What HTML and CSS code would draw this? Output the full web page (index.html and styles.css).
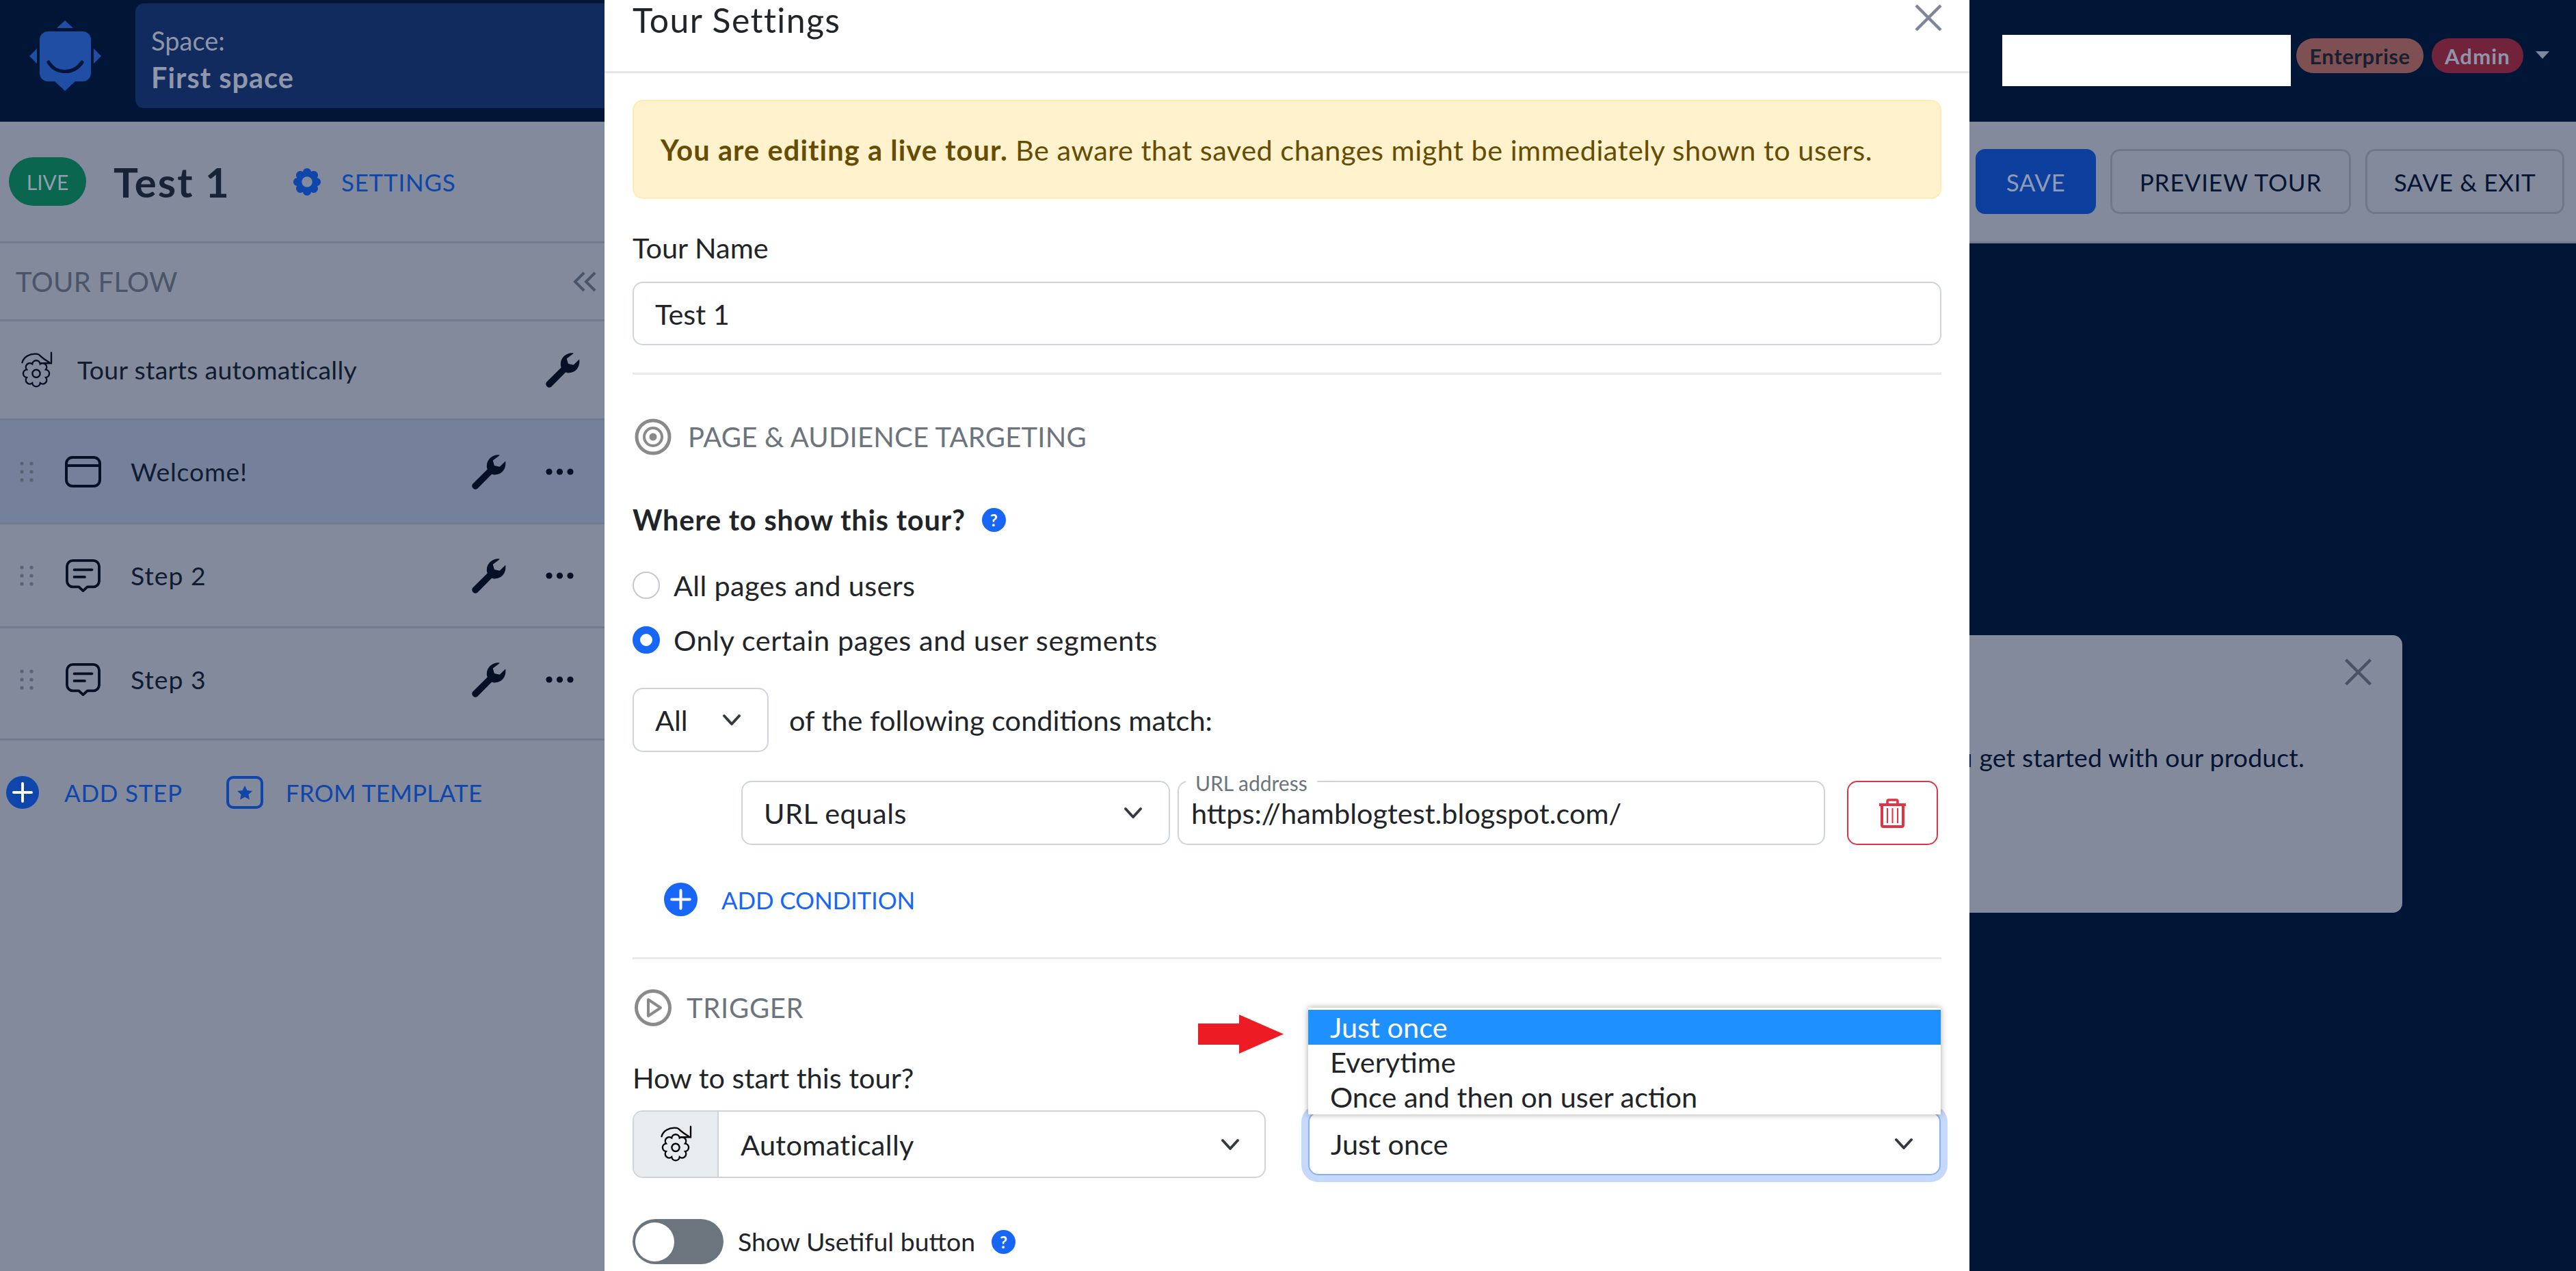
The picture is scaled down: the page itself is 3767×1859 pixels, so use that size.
FILE: index.html
```html
<!DOCTYPE html>
<html lang="en">
<head>
<meta charset="utf-8">
<title>Tour Settings</title>
<link rel="stylesheet" href="styles.css">
</head>
<body>
<svg class="defs" width="0" height="0">
  <defs>
    <path id="flower" d="M6.47-2.68A2.7 2.7 0 0 1 6.47 2.68A2.7 2.7 0 0 1 2.68 6.47A2.7 2.7 0 0 1-2.68 6.47A2.7 2.7 0 0 1-6.47 2.68A2.7 2.7 0 0 1-6.47-2.68A2.7 2.7 0 0 1-2.68-6.47A2.7 2.7 0 0 1 2.68-6.47A2.7 2.7 0 0 1 6.47-2.68Z"/>
    <symbol id="i-auto" viewBox="-11 -15 22 25.5">
      <g fill="none" stroke="currentColor" stroke-width="1.1">
        <use href="#flower"/>
        <circle r="2.6"/>
        <path d="M-9.5-7.5C-8.5-11.5-4-13.5-.5-13.3C3.5-13-.0-13 8.8-7.6" stroke-linecap="round"/>
        <path d="M10.2-14.2V-7H3.5" stroke-linecap="round"/>
      </g>
    </symbol>
    <symbol id="i-wrench" viewBox="0 0 24 24">
      <path fill="currentColor" d="M19.2.6C14.8.4 10.9 3.7 11 8.2c0 .9.2 1.6.4 2.2L1.5 20.2a2.3 2.3 0 0 0 3.2 3.2l9.7-9.8c.8.3 1.6.5 2.5.4 4.2-.2 7-3.6 6.8-8.2l-.1-.9-3.9 3.8-3.6-.8-1-3.5L19.7.9z"/>
    </symbol>
    <symbol id="i-more" viewBox="0 0 41 10">
      <g fill="currentColor"><circle cx="5" cy="5" r="4.6"/><circle cx="20.5" cy="5" r="4.6"/><circle cx="36" cy="5" r="4.6"/></g>
    </symbol>
    <symbol id="i-grip" viewBox="0 0 20 30">
      <g fill="currentColor"><circle cx="3" cy="3" r="2.6"/><circle cx="17" cy="3" r="2.6"/><circle cx="3" cy="15" r="2.6"/><circle cx="17" cy="15" r="2.6"/><circle cx="3" cy="27" r="2.6"/><circle cx="17" cy="27" r="2.6"/></g>
    </symbol>
    <symbol id="i-msg" viewBox="0 0 53 50">
      <g fill="none" stroke="currentColor" stroke-width="4" stroke-linejoin="round" stroke-linecap="round">
        <path d="M11 2H42A9 9 0 0 1 51 11V33A9 9 0 0 1 42 42H33L26.5 48L20 42H11A9 9 0 0 1 2 33V11A9 9 0 0 1 11 2Z"/>
        <path d="M13 16H40M13 27H29"/>
      </g>
    </symbol>
    <symbol id="i-chev" viewBox="0 0 28 18">
      <path d="M3 3L14 15L25 3" fill="none" stroke="currentColor" stroke-width="4" stroke-linecap="round" stroke-linejoin="round"/>
    </symbol>
    <symbol id="i-plus" viewBox="0 0 48 48">
      <circle cx="24" cy="24" r="24" fill="currentColor"/>
      <path d="M24 11V37M11 24H37" stroke="#fff" stroke-width="4" stroke-linecap="round"/>
    </symbol>
    <symbol id="i-x" viewBox="0 0 40 40">
      <path d="M2 2L38 38M38 2L2 38" fill="none" stroke="currentColor" stroke-width="4.5"/>
    </symbol>
  </defs>
</svg>

<header class="topbar">
  <svg class="logo" viewBox="43 30 105 103" aria-hidden="true">
    <path fill="#1f4ea4" d="M95 30L107 41H83ZM43 82L54 71V93ZM148 82L137 71V93ZM70 46H121A12 12 0 0 1 133 58V107A12 12 0 0 1 121 119H110L95 133L80 119H70A12 12 0 0 1 58 107V58A12 12 0 0 1 70 46Z"/>
    <path fill="none" stroke="#011637" stroke-width="5" stroke-linecap="round" d="M71 91C82 109 108 109 120 91"/>
  </svg>
  <div class="space-box">
    <span class="space-label">Space:</span>
    <strong class="space-name">First space</strong>
  </div>
  <div class="account">
    <div class="redacted"></div>
    <span class="badge badge-plan">Enterprise</span>
    <span class="badge badge-role">Admin</span>
    <span class="caret"></span>
  </div>
</header>

<section class="toolbar">
  <span class="live">LIVE</span>
  <h1 class="tour-title">Test 1</h1>
  <a class="settings-link">
    <svg class="settings-gear" viewBox="-11 -11 22 22"><path fill="currentColor" fill-rule="evenodd" d="M6.47-2.68A2.7 2.7 0 0 1 6.47 2.68A2.7 2.7 0 0 1 2.68 6.47A2.7 2.7 0 0 1-2.68 6.47A2.7 2.7 0 0 1-6.47 2.68A2.7 2.7 0 0 1-6.47-2.68A2.7 2.7 0 0 1-2.68-6.47A2.7 2.7 0 0 1 2.68-6.47A2.7 2.7 0 0 1 6.47-2.68ZM0-3.4A3.4 3.4 0 1 0 0 3.4A3.4 3.4 0 1 0 0-3.4Z"/></svg>
    <span class="settings-text">SETTINGS</span>
  </a>
  <div class="toolbar-actions">
    <button class="btn btn-save">SAVE</button>
    <button class="btn btn-preview">PREVIEW TOUR</button>
    <button class="btn btn-exit">SAVE &amp; EXIT</button>
  </div>
</section>

<main class="workspace">
  <aside class="sidebar">
    <div class="flow-head">
      <span class="flow-title">TOUR FLOW</span>
      <svg class="collapse" viewBox="0 0 36 30"><path d="M17 2L4 15L17 28M33 2L20 15L33 28" fill="none" stroke="currentColor" stroke-width="4"/></svg>
    </div>
    <div class="flow-start">
      <svg class="ic-auto"><use href="#i-auto"/></svg>
      <span class="start-text">Tour starts automatically</span>
      <svg class="ic-wrench start-wrench"><use href="#i-wrench"/></svg>
    </div>
    <div class="step step-active">
      <svg class="ic-grip"><use href="#i-grip"/></svg>
      <svg class="ic-step" viewBox="0 0 53 46"><g fill="none" stroke="currentColor" stroke-width="4"><rect x="2" y="2" width="49" height="42" rx="9"/><path d="M2 14H51"/></g></svg>
      <span class="step-name ls-welcome">Welcome!</span>
      <svg class="ic-wrench"><use href="#i-wrench"/></svg>
      <svg class="ic-more"><use href="#i-more"/></svg>
    </div>
    <div class="step">
      <svg class="ic-grip"><use href="#i-grip"/></svg>
      <svg class="ic-step"><use href="#i-msg"/></svg>
      <span class="step-name">Step 2</span>
      <svg class="ic-wrench"><use href="#i-wrench"/></svg>
      <svg class="ic-more"><use href="#i-more"/></svg>
    </div>
    <div class="step step-last">
      <svg class="ic-grip"><use href="#i-grip"/></svg>
      <svg class="ic-step"><use href="#i-msg"/></svg>
      <span class="step-name">Step 3</span>
      <svg class="ic-wrench"><use href="#i-wrench"/></svg>
      <svg class="ic-more"><use href="#i-more"/></svg>
    </div>
    <div class="add-row">
      <svg class="ic-add"><use href="#i-plus"/></svg>
      <span class="add-text">ADD STEP</span>
      <svg class="ic-template" viewBox="0 0 54 48"><rect x="2" y="2" width="50" height="44" rx="8" fill="none" stroke="currentColor" stroke-width="4"/><path fill="currentColor" d="M27 14l3.4 7 7.6.9-5.6 5.2 1.5 7.5-6.9-3.8-6.9 3.8 1.5-7.5L16 21.900l7.600-.9z"/></svg>
      <span class="template-text">FROM TEMPLATE</span>
    </div>
  </aside>

  <div class="canvas">
    <div class="preview-card">
      <svg class="card-close"><use href="#i-x"/></svg>
      <p class="card-text">This short tour will help you get started with our product.</p>
    </div>
  </div>
</main>

<div class="modal">
  <div class="modal-header">
    <h2 class="modal-title">Tour Settings</h2>
    <svg class="modal-close"><use href="#i-x"/></svg>
  </div>
  <div class="modal-body">
    <div class="alert"><p class="alert-text"><strong class="alert-strong">You are editing a live tour.</strong> Be aware that saved changes might be immediately shown to users.</p></div>

    <label class="label label-name">Tour Name</label>
    <div class="field field-name">Test 1</div>
    <hr class="rule rule-a">

    <div class="section section-target">
      <svg class="section-icon" viewBox="0 0 54 54"><g fill="none" stroke="#8a8a8a"><circle cx="27" cy="27" r="24" stroke-width="5"/><circle cx="27" cy="27" r="13" stroke-width="4"/></g><circle cx="27" cy="27" r="5.500" fill="#8a8a8a"/></svg>
      <span class="section-title">PAGE &amp; AUDIENCE TARGETING</span>
    </div>

    <div class="where"><strong class="where-title">Where to show this tour?</strong><span class="help">?</span></div>
    <div class="radio radio-first"><span class="radio-dot"></span><span class="radio-long">All pages and users</span></div>
    <div class="radio radio-second"><span class="radio-dot radio-on"></span><span class="radio-long">Only certain pages and user segments</span></div>

    <div class="match-row">
      <div class="select select-all"><span>All</span><svg class="chev"><use href="#i-chev"/></svg></div>
      <span class="match-text">of the following conditions match:</span>
    </div>

    <div class="cond-row">
      <div class="select select-cond"><span class="ls-url">URL equals</span><svg class="chev"><use href="#i-chev"/></svg></div>
      <div class="field field-url"><span class="float-label">URL address</span>https://hamblogtest.blogspot.com/</div>
      <button class="btn-delete">
        <svg class="ic-trash" viewBox="0 0 41 43"><g fill="none" stroke="#dc3545" stroke-linejoin="round"><path d="M1 9H40" stroke-width="4"/><path d="M13 8V4A2 2 0 0 1 15 2H26A2 2 0 0 1 28 4V8" stroke-width="3.500"/><path d="M5 9V39A2 2 0 0 0 7 41H34A2 2 0 0 0 36 39V9" stroke-width="4"/><path d="M13 14V36M20.500 14V36M28 14V36" stroke-width="2"/></g></svg>
      </button>
    </div>

    <div class="add-cond">
      <svg class="ic-add-cond"><use href="#i-plus"/></svg>
      <span class="add-cond-text">ADD CONDITION</span>
    </div>
    <hr class="rule rule-b">

    <div class="section section-trigger">
      <svg class="section-icon" viewBox="0 0 54 54"><circle cx="27" cy="27" r="24.500" fill="none" stroke="#8a8a8a" stroke-width="5"/><path d="M20 15L38 27L20 39Z" fill="none" stroke="#8a8a8a" stroke-width="4" stroke-linejoin="round"/></svg>
      <span class="section-title section-title-trigger">TRIGGER</span>
    </div>
    <label class="label label-how">How to start this tour?</label>

    <div class="trigger-row">
      <div class="select select-start">
        <span class="addon"><svg class="ic-auto ic-auto-addon"><use href="#i-auto"/></svg></span>
        <span class="start-value">Automatically</span>
        <svg class="chev"><use href="#i-chev"/></svg>
      </div>
      <div class="freq">
        <div class="select select-freq"><span>Just once</span><svg class="chev"><use href="#i-chev"/></svg></div>
        <ul class="dropdown">
          <li class="option option-on">Just once</li>
          <li class="option">Everytime</li>
          <li class="option">Once and then on user action</li>
        </ul>
        <svg class="red-arrow" viewBox="0 0 125 57"><path fill="#ed1c24" d="M0 13H60V0L125 28.500L60 57V44H0Z"/></svg>
      </div>
    </div>

    <div class="toggle-row">
      <span class="toggle"><span class="knob"></span></span>
      <span class="toggle-text">Show Usetiful button</span>
      <span class="help">?</span>
    </div>
  </div>
</div>
</body>
</html>
```
FILE: styles.css
```css
* { box-sizing: border-box; }
html, body { margin: 0; padding: 0; }
body {
  position: relative;
  width: 3767px;
  height: 1859px;
  overflow: hidden;
  background: #011637;
  color: #212529;
  font-family: Lato, "Noto Sans", sans-serif;
  font-size: 41.5px;
  line-height: 48px;
}
.defs { position: absolute; }
h1, h2, p, ul { margin: 0; padding: 0; }

/* top bar */
.topbar { display: flex; height: 178px; background: #011637; }
.logo { width: 105px; height: 103px; margin: 30px 0 0 43px; flex: none; }
.space-box {
  display: flex; flex-direction: column; flex: none;
  width: 900px; height: 153px; margin: 5px 0 0 50px; padding: 30px 0 0 23px;
  background: #122b5e; border-radius: 12px; color: #8d96a8;
}
.space-label { font-size: 38px; line-height: 48px; }
.space-name { font-size: 41.5px; line-height: 60px; letter-spacing: 1px; font-weight: 700; color: #9097aa; }
.account { display: flex; align-items: flex-start; margin-left: auto; padding: 51px 39px 0 0; }
.redacted { width: 422px; height: 75px; background: #fff; margin-right: 8px; }
.badge {
  display: flex; align-items: center; justify-content: center;
  height: 51px; margin-top: 5px; border-radius: 25px;
  font-size: 31px; font-weight: 700;
}
.badge-plan { width: 186px; background: #7e5054; color: #18202f; letter-spacing: .6px; }
.badge-role { width: 134px; margin-left: 12px; background: #72233c; color: #8f95a8; letter-spacing: 1.2px; }
.caret {
  width: 0; height: 0; margin: 24px 0 0 18px;
  border-left: 10px solid transparent; border-right: 10px solid transparent;
  border-top: 11px solid #7f889b;
}

/* toolbar */
.toolbar {
  display: flex; align-items: center;
  height: 178px; background: #828a9b;
  border-bottom: 3px solid #727a8d;
}
.live {
  display: flex; align-items: center; justify-content: center; flex: none;
  width: 113px; height: 71px; margin-left: 13px; border-radius: 36px;
  background: #0b6650; color: #8f9fae; font-size: 30px;
}
.tour-title { margin-left: 40px; font-size: 60px; line-height: 72px; font-weight: 700; letter-spacing: 2px; color: #182338; }
.settings-link { display: flex; align-items: center; margin-left: 87px; color: #0f46ac; }
.settings-gear { width: 50px; height: 50px; }
.settings-text { margin-left: 25px; font-size: 35px; letter-spacing: .75px; }
.toolbar-actions { display: flex; gap: 21px; margin-left: auto; padding-right: 17px; }
.btn {
  height: 95px; border-radius: 14px; font: inherit; font-size: 35px;
  border: 3px solid #6f7789; background: transparent; color: #051433; padding: 0;
}
.btn-save { width: 176px; background: #0d3f9f; border-color: #0d3f9f; color: #8f9bb3; letter-spacing: .6px; }
.btn-preview { width: 352px; letter-spacing: .9px; }
.btn-exit { width: 291px; letter-spacing: .65px; }

/* workspace */
.workspace { display: flex; height: 1503px; }
.sidebar { width: 884px; flex: none; background: #828a9b; color: #111c33; font-size: 37.4px; }
.flow-head {
  display: flex; align-items: center; justify-content: space-between;
  height: 114px; padding: 0 11px 0 23px; border-bottom: 3px solid #727a8d;
}
.flow-title { font-size: 40px; letter-spacing: .3px; color: #4b5569; }
.collapse { width: 36px; height: 30px; color: #4b5569; }
.flow-start {
  display: flex; align-items: center;
  height: 145px; padding: 0 36px 0 29px; border-bottom: 3px solid #727a8d;
}
.ic-auto { width: 48px; height: 55px; color: #050f25; flex: none; }
.start-text { margin-left: 36px; letter-spacing: .3px; }
.ic-wrench { width: 52px; height: 52px; margin-left: auto; color: #050f25; flex: none; }
.step {
  display: flex; align-items: center;
  height: 152px; padding: 0 45px 0 29px; border-bottom: 3px solid #727a8d;
}
.step-active { background: #75819a; }
.step-last { height: 164px; padding-bottom: 12px; }
.ic-grip { width: 20px; height: 30px; color: #5a6275; flex: none; }
.ic-step { width: 53px; height: 48px; margin-left: 46px; color: #050f25; flex: none; }
.step-name { margin-left: 43px; letter-spacing: 1px; }
.ls-welcome { letter-spacing: .8px; }
.ic-more { width: 41px; height: 10px; margin-left: 58px; color: #050f25; flex: none; }
.add-row { display: flex; align-items: center; padding: 52px 0 0 9px; color: #0f46ac; font-size: 35px; }
.ic-add { width: 48px; height: 48px; flex: none; }
.add-text { margin-left: 37px; letter-spacing: .75px; }
.ic-template { width: 54px; height: 48px; margin-left: 64px; flex: none; }
.template-text { margin-left: 33px; letter-spacing: .25px; }

.canvas { position: relative; flex: 1; }
.preview-card {
  position: absolute; left: 1100px; top: 573px;
  width: 1529px; height: 406px; padding: 155px 143px 0 0;
  background: #828a9b; border-radius: 14px; color: #051433; text-align: right;
}
.card-text { font-size: 37.4px; letter-spacing: .2px; }
.card-close { position: absolute; right: 44px; top: 34px; width: 41px; height: 40px; color: #4a5266; }

/* modal */
.modal {
  position: absolute; left: 884px; top: 0;
  width: 1996px; height: 1859px; overflow: hidden; background: #fff;
}
.modal-header {
  display: flex; justify-content: space-between; align-items: flex-start;
  height: 107px; padding: 0 40px 0 41px; border-bottom: 3px solid #e4e6e8;
}
.modal-title { font-size: 50px; line-height: 58px; font-weight: 400; letter-spacing: 1.400px; }
.modal-close { width: 40px; height: 40px; margin-top: 6px; color: #7c8599; }
.modal-body { padding: 39px 41px 0; }
.alert {
  display: flex; align-items: center;
  height: 145px; padding-left: 39px;
  background: #fff2cc; border: 2px solid #ffecb5; border-radius: 15px; color: #664d03;
}
.alert-text { letter-spacing: .47px; white-space: nowrap; }
.alert-strong { letter-spacing: 1.100px; font-weight: 700; }
.label { display: block; }
.label-name { margin-top: 47px; }
.field {
  position: relative; display: flex; align-items: center;
  background: #fff; border: 2px solid #ced4da; border-radius: 15px;
}
.field-name { height: 93px; margin-top: 26px; padding-left: 31px; }
.rule { height: 3px; border: 0; margin: 0; background: #e8eaec; }
.rule-a { margin-top: 40px; }
.section { display: flex; align-items: center; height: 54px; }
.section-target { margin-top: 64px; }
.section-icon { width: 54px; height: 54px; margin-left: 3px; flex: none; }
.section-title { margin-left: 24px; font-size: 40px; letter-spacing: .2px; color: #6c757d; }
.section-title-trigger { margin-left: 22px; letter-spacing: .7px; }
.where { display: flex; align-items: center; margin-top: 70px; }
.where-title { font-weight: 700; letter-spacing: .8px; }
.help {
  display: flex; align-items: center; justify-content: center; flex: none;
  width: 35px; height: 35px; margin-left: 24px; border-radius: 50%;
  background: #1766f5; color: #fff; font-size: 24px; line-height: 35px; font-weight: 700;
}
.radio { display: flex; align-items: center; height: 48px; }
.radio-first { margin-top: 48px; }
.radio-second { margin-top: 32px; }
.radio-dot {
  width: 40px; height: 40px; margin-right: 20px; flex: none;
  border: 2px solid #c5c9cd; border-radius: 50%; background: #fff;
}
.radio-on { border: 11px solid #1766f5; }
.radio-long { letter-spacing: .3px; }
.radio-second .radio-long { letter-spacing: .58px; }
.match-row { display: flex; align-items: center; height: 94px; margin-top: 46px; }
.select {
  display: flex; align-items: center; justify-content: space-between;
  background: #fff; border: 2px solid #ced4da; border-radius: 15px;
  padding: 0 38px 0 31px;
}
.select-all { width: 199px; height: 94px; }
.chev { width: 28px; height: 18px; color: #343a40; flex: none; }
.match-text { margin-left: 30px; }
.cond-row { display: flex; height: 94px; margin: 42px 0 0 159px; }
.select-cond { width: 627px; }
.ls-url { letter-spacing: .5px; }
.field-url { width: 947px; margin-left: 11px; padding-left: 18px; }
.float-label {
  position: absolute; left: 10px; top: -17px; padding: 0 14px;
  background: #fff; color: #6c757d; font-size: 30px; line-height: 36px;
}
.btn-delete {
  display: flex; align-items: center; justify-content: center;
  width: 133px; margin-left: 32px; padding: 0;
  background: #fff; border: 2px solid #dc3545; border-radius: 15px;
}
.ic-trash { width: 41px; height: 43px; }
.add-cond { display: flex; align-items: center; height: 49px; margin: 55px 0 0 46px; color: #1766f5; }
.ic-add-cond { width: 49px; height: 49px; flex: none; }
.add-cond-text { margin-left: 35px; font-size: 35px; letter-spacing: -.15px; }
.rule-b { margin-top: 60px; }
.section-trigger { margin-top: 44px; }
.label-how { margin-top: 51px; }
.trigger-row { display: grid; grid-template-columns: 926px 925px; column-gap: 62px; margin-top: 24px; }
.select-start { height: 99px; padding: 0 36px 0 0; overflow: hidden; justify-content: flex-start; }
.addon {
  display: flex; align-items: center; justify-content: center;
  width: 124px; height: 100%; background: #e9ecef; border-right: 2px solid #ced4da; flex: none;
}
.ic-auto-addon { color: #000; }
.start-value { margin-left: 32px; letter-spacing: .3px; }
.select-start .chev { margin-left: auto; }
.freq { position: relative; padding-top: 2px; }
.select-freq { height: 93px; border-color: #86b0f8; box-shadow: 0 0 0 10px #c6d8fb; }
.dropdown {
  position: absolute; left: 0; right: 0; bottom: 93px;
  list-style: none; padding-top: 3px; background: #fff;
  box-shadow: 0 0 9px rgba(0, 0, 0, .35);
}
.option { height: 51px; padding-left: 32px; line-height: 50px; }
.option-on { background: #1e90ff; color: #fff; }
.red-arrow { position: absolute; left: -161px; top: -140px; width: 125px; height: 57px; }
.toggle-row { display: flex; align-items: center; height: 66px; margin-top: 60px; font-size: 37.4px; }
.toggle {
  display: flex; align-items: center; width: 133px; height: 66px; padding-left: 4px;
  background: #6c757d; border-radius: 33px; flex: none;
}
.knob { width: 57px; height: 57px; background: #fff; border-radius: 50%; }
.toggle-text { margin-left: 21px; }
```
